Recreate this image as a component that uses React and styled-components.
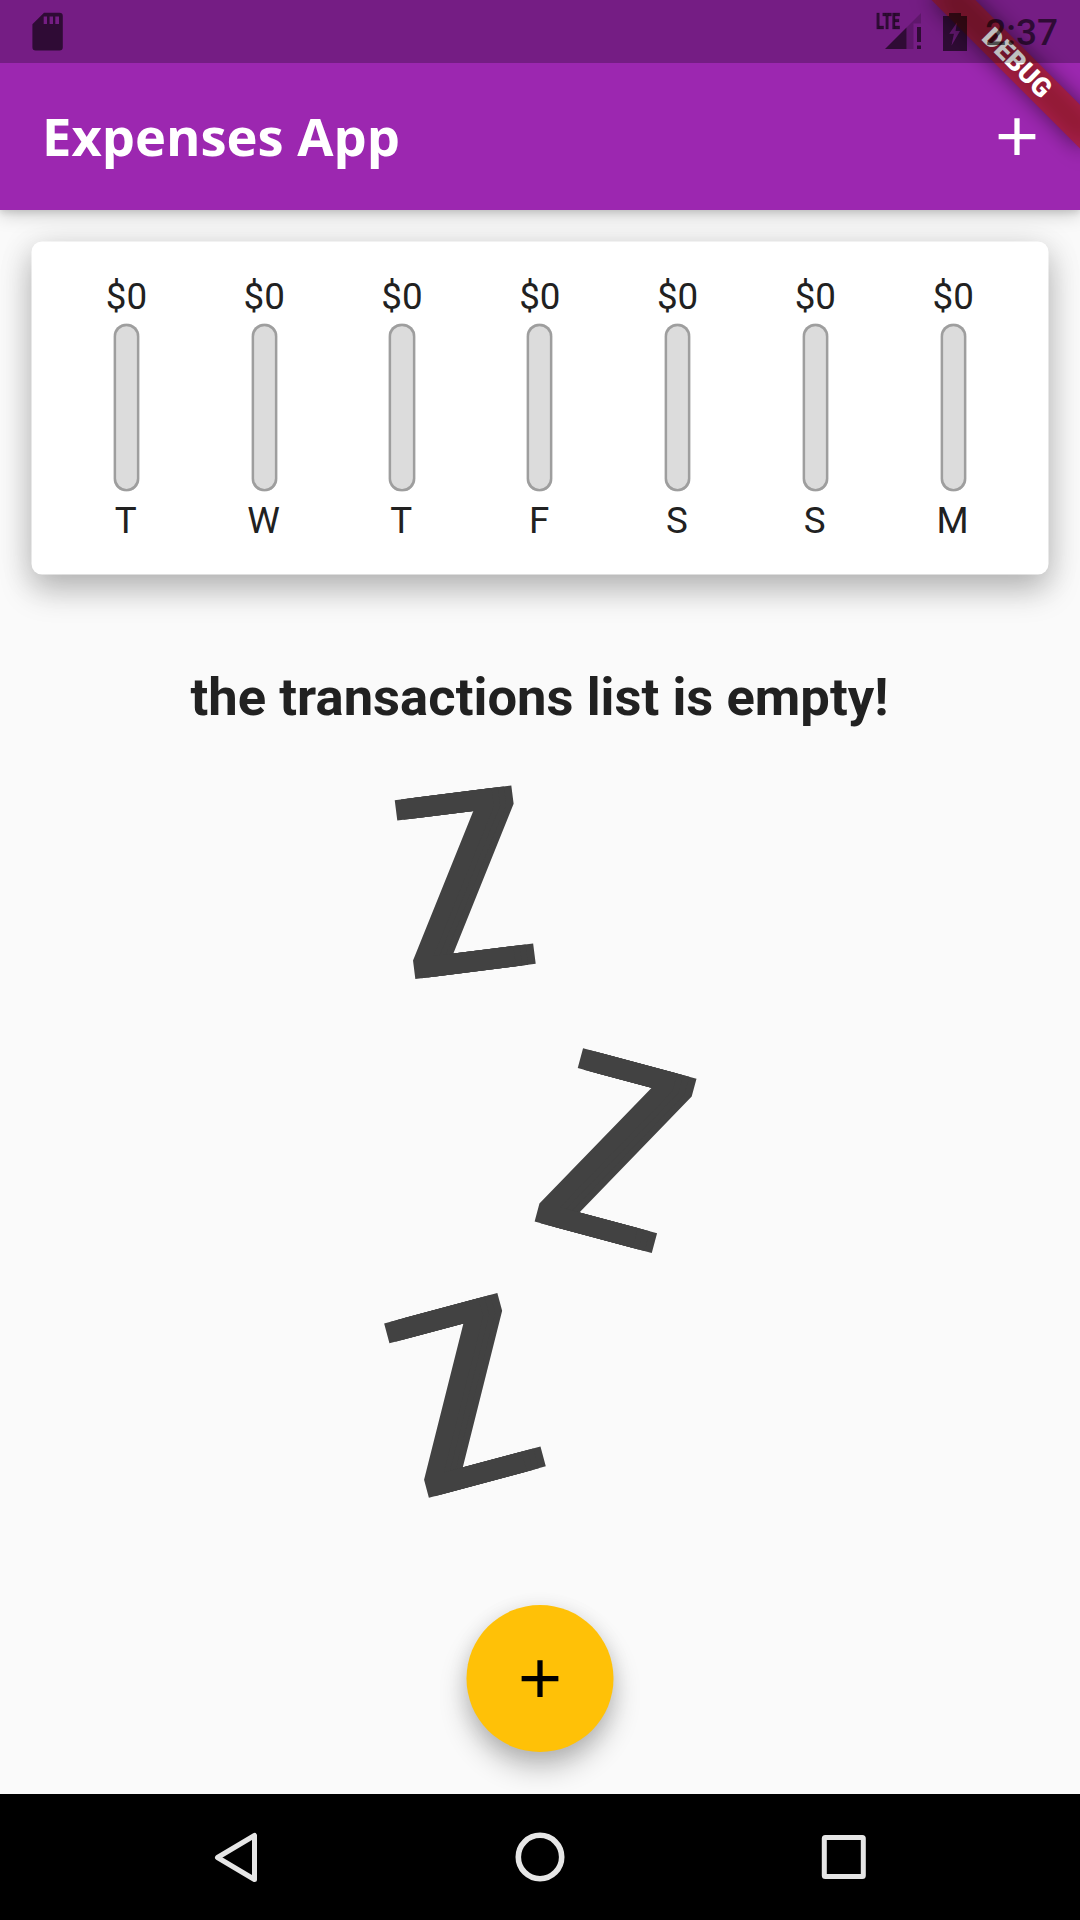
import React from "react";
import styled, { createGlobalStyle } from "styled-components";

const Global = createGlobalStyle`
  * { box-sizing: border-box; }
  body { margin: 0; background: #fafafa; }
`;

const Screen = styled.div`
  position: relative;
  display: flex;
  flex-direction: column;
  width: 1080px;
  height: 1920px;
  overflow: hidden;
  background: #fafafa;
  color: #212121;
  font-family: Roboto, "Liberation Sans", sans-serif;
`;

const Header = styled.header`
  position: relative;
  z-index: 1;
  flex: none;
  height: 210px;
  padding: 63px 32px 0 42px;
  display: flex;
  align-items: center;
  justify-content: space-between;
  background: #9c27b0;
  box-shadow: 0 4px 18px rgba(0, 0, 0, 0.2), 0 3px 6px rgba(0, 0, 0, 0.1);
`;

const Title = styled.h1`
  margin: 0 0 2px;
  color: #fff;
  font: 700 52.5px/72px "Open Sans", sans-serif;
`;

const IconButton = styled.button`
  display: flex;
  padding: 0;
  border: 0;
  background: none;
  color: ${(p) => p.$color};
  transform: translateX(0.5px);
`;

const StatusBar = styled.div`
  position: absolute;
  inset: 0 0 auto 0;
  z-index: 3;
  height: 63px;
  padding: 0 22px 0 32px;
  display: flex;
  align-items: center;
  justify-content: space-between;
  background: rgba(0, 0, 0, 0.25);
  color: rgba(0, 0, 0, 0.6);
`;

const StatusGroup = styled.div`
  display: flex;
  align-items: center;
`;

const Signal = styled.div`
  display: flex;
  align-items: flex-start;
  width: 67px;
  height: 37px;
`;

const Network = styled.span`
  width: 9px;
  font: 900 22.5px/17px Roboto, sans-serif;
  transform: scaleX(0.65);
  transform-origin: 0 0;
  -webkit-text-stroke: 0.6px rgba(0, 0, 0, 0.4);
`;

const Clock = styled.span`
  margin-left: 18px;
  padding-top: 3px;
  font: 500 37px/60px Roboto, sans-serif;
`;

const Ribbon = styled.div`
  position: absolute;
  z-index: 2;
  top: 0;
  left: 1080px;
  width: 0;
  height: 0;
  transform: rotate(45deg);
`;

const RibbonShadow = styled.div`
  position: absolute;
  top: 73.5px;
  left: -105px;
  width: 210px;
  height: 31.5px;
  background: rgba(0, 0, 0, 0.5);
  filter: blur(10.4px);
`;

const RibbonLabel = styled.div`
  position: absolute;
  top: 73.5px;
  left: -105px;
  width: 210px;
  height: 31.5px;
  background: rgba(183, 28, 28, 0.627);
  color: #fff;
  text-align: center;
  font: 900 26.8px/31.5px Roboto, sans-serif;
`;

const Content = styled.main`
  flex: 1;
  display: flex;
  flex-direction: column;
  align-items: center;
  padding: 31px 32px 42px 31px;
`;

const Card = styled.section`
  width: 1017px;
  height: 333px;
  padding: 33px 26px 0;
  display: grid;
  grid-template-columns: repeat(7, 137.8px);
  border-radius: 10.5px;
  background: #fff;
  box-shadow: 0 16px 32px rgba(0, 0, 0, 0.22), 0 4px 34px rgba(0, 0, 0, 0.12);
  transform: translate(0.5px, 0.5px);
`;

const Day = styled.div`
  display: flex;
  flex-direction: column;
  align-items: center;
  font-size: 36.75px;
  line-height: 43px;
`;

const Label = styled.span`
  padding-right: ${(p) => p.$inset}px;
`;

const Bar = styled.div`
  width: 26.25px;
  height: 168px;
  margin: 6px 0 7px;
  border-radius: 13.2px;
  background: #dcdcdc;
  box-shadow: inset 0 0 0 2.625px #9e9e9e;
`;

const EmptyTitle = styled.h2`
  margin: 92px 0 0;
  font-weight: 700;
  font-size: 52.5px;
  line-height: 62px;
  letter-spacing: 0.04px;
`;

const Sleep = styled.div`
  width: 271px;
  margin: 64.5px 0 0;
  display: flex;
  flex-direction: column;
`;

const Snore = styled.div`
  width: 120px;
  height: 180px;
  margin: ${(p) => p.$gap}px 0 0 ${(p) => p.$indent}px;
  transform: rotate(${(p) => p.$angle}deg);
`;

const SnoreLetter = styled.span`
  display: block;
  width: 180px;
  color: #424242;
  font: 400 246.9px/180px "DejaVu Sans", sans-serif;
  transform-origin: 0 0;
  transform: translate(-8px, 4.2px) scaleX(0.69);
  text-shadow: 9px 0 #424242, 18px 0 #424242, 28.8px 0 #424242;
`;

const Fab = styled.button`
  width: 147px;
  height: 147px;
  margin-top: auto;
  padding: 0;
  display: flex;
  align-items: center;
  justify-content: center;
  border: 0;
  border-radius: 50%;
  background: #ffc107;
  color: #000;
  box-shadow: 0 16px 28px rgba(0, 0, 0, 0.24), 0 4px 20px rgba(0, 0, 0, 0.1);
  transform: translateX(0.5px);
`;

const NavBar = styled.nav`
  flex: none;
  height: 126px;
  padding: 0 172px 0 171px;
  display: flex;
  align-items: center;
  justify-content: space-between;
  background: #000;
`;

const Plus = () => (
  <svg width="63" height="63" viewBox="0 0 24 24" fill="currentColor">
    <path d="M19 13h-6v6h-2v-6H5v-2h6V5h2v6h6z" />
  </svg>
);

const week = ["T", "W", "T", "F", "S", "S", "M"];

export default function App() {
  return (
    <Screen>
      <Global />
      <Header>
        <Title>Expenses App</Title>
        <IconButton $color="#fff" aria-label="Add"><Plus /></IconButton>
      </Header>
      <Ribbon>
        <RibbonShadow />
        <RibbonLabel>DEBUG</RibbonLabel>
      </Ribbon>
      <StatusBar>
        <svg width="31" height="39" viewBox="0 0 31 39" fill="currentColor" fillRule="evenodd">
          <path d="M12 0.7H27.5A3.3 3.3 0 0 1 30.8 4V35.3A3.3 3.3 0 0 1 27.5 38.6H3.7A3.3 3.3 0 0 1 .4 35.3V12.3ZM11.7 4.5V12H15V4.5ZM17.6 4.5V12H21V4.5ZM23.3 4.5V12H27V4.5Z" />
        </svg>
        <StatusGroup>
          <Signal>
            <Network>LTE</Network>
            <svg width="37" height="37" viewBox="0 0 37 37" fill="currentColor">
              <path d="M0 36L21.5 14.5V36Z" />
              <path d="M21.5 14.5L36 0V10.5H28.5V36H21.5Z" opacity=".3" />
              <path d="M32 14H36V29H32ZM32 32.5H36V36H32Z" />
            </svg>
          </Signal>
          <svg width="24" height="38" viewBox="0 0 24 38">
            <path fill="currentColor" fillRule="evenodd" d="M6 0H18V3H24V38H0V3H6ZM14 9.5L6.3 20.7H11L8.5 32.5L17 18H12.5Z" />
            <path fill="currentColor" opacity=".2" d="M14 9.5L6.3 20.7H11L8.5 32.5L17 18H12.5Z" />
          </svg>
          <Clock>2:37</Clock>
        </StatusGroup>
      </StatusBar>
      <Content>
        <Card>
          {week.map((d, i) => (
            <Day key={i}>
              <Label $inset={0}>$0</Label>
              <Bar />
              <Label $inset={1.5}>{d}</Label>
            </Day>
          ))}
        </Card>
        <EmptyTitle>the transactions list is empty!</EmptyTitle>
        <Sleep>
          <Snore $angle={-7.2} $gap={0} $indent={0}><SnoreLetter>Z</SnoreLetter></Snore>
          <Snore $angle={15} $gap={88} $indent={152}><SnoreLetter>Z</SnoreLetter></Snore>
          <Snore $angle={-15} $gap={65} $indent={0}><SnoreLetter>Z</SnoreLetter></Snore>
        </Sleep>
        <Fab aria-label="Add transaction"><Plus /></Fab>
      </Content>
      <NavBar>
        <svg width="126" height="63" viewBox="0 0 126 63" fill="none" stroke="#e6e6e6" strokeWidth="5" strokeLinejoin="round">
          <path d="M83.5 9.5V53.5L46.5 31.5Z" />
        </svg>
        <svg width="64" height="63" viewBox="0 0 64 63" fill="none" stroke="#e6e6e6" strokeWidth="5.6">
          <circle cx="32" cy="31" r="21.7" />
        </svg>
        <svg width="126" height="63" viewBox="0 0 126 63" fill="none" stroke="#e6e6e6" strokeWidth="5" strokeLinejoin="round">
          <rect x="42.3" y="11.5" width="39" height="39" rx="1" />
        </svg>
      </NavBar>
    </Screen>
  );
}
